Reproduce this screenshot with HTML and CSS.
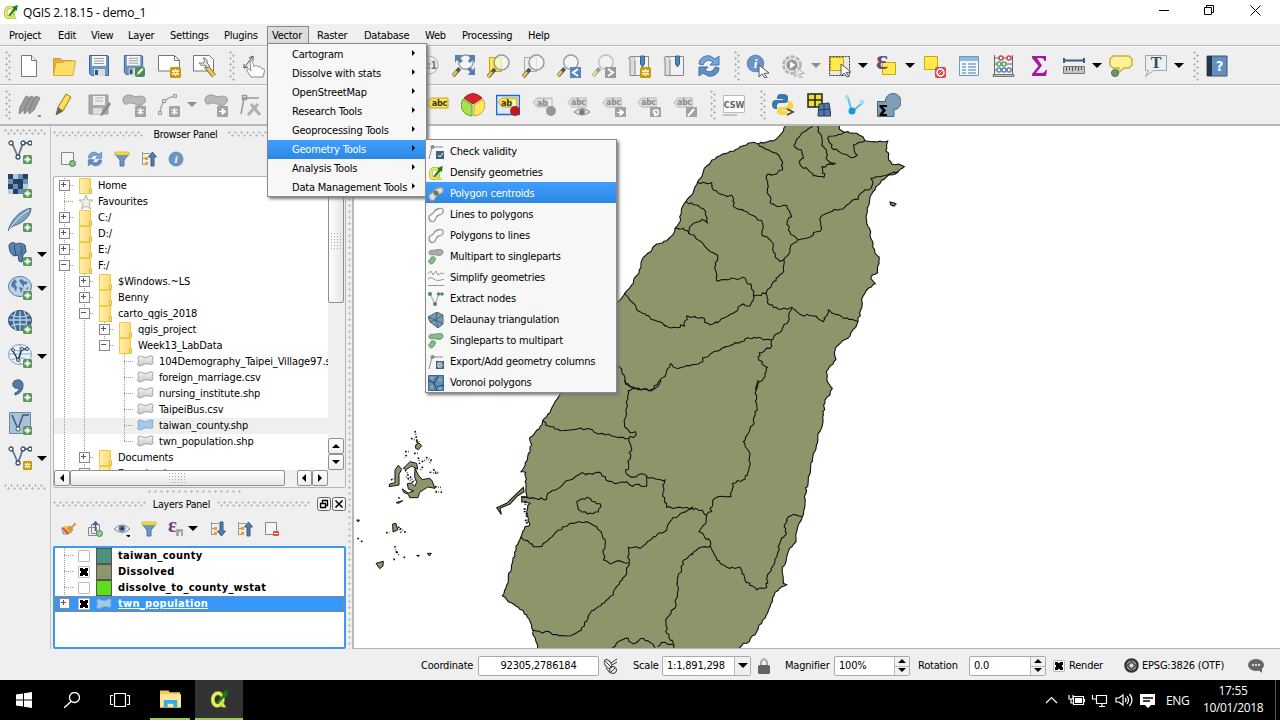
FILE: index.html
```html
<!DOCTYPE html>
<html lang="en">
<head>
<meta charset="utf-8">
<title>QGIS 2.18.15 - demo_1</title>
<link rel="stylesheet" href="styles.css">
</head>
<body>
<svg class="defs" width="0" height="0">
<defs>
<linearGradient id="gf" x2="1"><stop stop-color="#fff0b0"/><stop offset="1" stop-color="#fbdc74"/></linearGradient>
<linearGradient id="gg" x2="0" y2="1"><stop stop-color="#f4f4f4"/><stop offset="1" stop-color="#c9c9c9"/></linearGradient>
<symbol id="plus" viewBox="0 0 9 9"><rect width="9" height="9" rx="1.5" fill="#5b965b"/><path d="M4.5 1.5v6M1.5 4.5h6" stroke="#fff" stroke-width="1.8"/></symbol>
<symbol id="star" viewBox="0 0 11 11"><rect width="11" height="11" rx="1.5" fill="#c79b05"/><path d="M5.500 2v7M2.200 3.500l6.600 4M2.200 7.500l6.600-4" stroke="#fff" stroke-width="1.600"/><circle cx="5.500" cy="5.500" r="1" fill="#c79b05"/></symbol>
<symbol id="gbox" viewBox="0 0 11 11"><rect width="11" height="11" rx="1" fill="#a2a2a2"/></symbol>
<symbol id="qgis" viewBox="0 0 24 24"><path d="M10.500 5C6 5 4 9 4 13s2 7 5.500 7 6.500-4 6.500-8-2-7-5.500-7z" fill="none" stroke="#8fa02c" stroke-width="5"/><path d="M10.500 5C6 5 4 9 4 13s2 7 5.500 7 6.500-4 6.500-8-2-7-5.500-7z" fill="none" stroke="#e6ee62" stroke-width="3.600"/><path d="M11 15l4-1 5 8h-5z" fill="#dce650" stroke="#8fa02c" stroke-width=".6"/><path d="M8 17l8-10-2-2 8-4-1 9-2-1-9 9z" fill="#1f7a18"/></symbol>
<symbol id="new" viewBox="0 0 24 24"><path d="M4.500 1.500h10l5 5v16h-15z" fill="#fff" stroke="#777"/><path d="M14.500 1.500v5h5" fill="#eee" stroke="#777"/></symbol>
<symbol id="open" viewBox="0 0 24 24"><path d="M1.500 21V4.500h7l2 2h10V11" fill="#e0b13a" stroke="#d09c22"/><path d="M1.500 21.500L4 8.500h7l2-1.500h10.500l-2.500 14.500z" fill="#ffdf68" stroke="#dcaa30"/></symbol>
<symbol id="save" viewBox="0 0 24 24"><path d="M2.500 1.500h18l1 1v19h-17l-2-2z" fill="#6a95c6" stroke="#41658f"/><path d="M5 2h14v10H5z" fill="#f6f6f3"/><path d="M7 4.500h10M7 7h10M7 9.500h10" stroke="#999"/><path d="M7 15h11v7H7z" fill="#ddd"/><path d="M8 16h3v5H8z" fill="#31557d"/></symbol>
<symbol id="saveas" viewBox="0 0 24 24"><use href="#save" width="23" height="23"/><rect x="13" y="13" width="10" height="10" rx="2" fill="#518955"/><path d="M15 21l1-3 4-4 1.500 1.500-4 4z" fill="#fff"/></symbol>
<symbol id="newcomp" viewBox="0 0 24 24"><path d="M1.500 1.500h16l5 5V17h-21z" fill="#fff" stroke="#777"/><path d="M17.500 2v4.500h5" fill="none" stroke="#777"/><use href="#star" x="13" y="13" width="11" height="11"/></symbol>
<symbol id="compmgr" viewBox="0 0 24 24"><path d="M1.500 1.500h16l4 4V17h-20z" fill="#fff" stroke="#777"/><path d="M14 12l8 10" stroke="#8a7630" stroke-width="5"/><path d="M15 13l7 9" stroke="#eac952" stroke-width="3"/><path d="M7 9c2 3 4 3 6 2l2 3 3-2-3-3c1-3-1-5-4-5l2 3-2 2z" fill="#ddd" stroke="#777"/></symbol>
<symbol id="hand" viewBox="0 0 24 24"><path d="M9 23l-4-6c-1-3 2-3 4 0l-1-9c1-3 3 0 4 5 1-2 3-2 4 0 2-1 3 0 4 2 2-1 3 1 2 4l-1 4z" fill="#fff" stroke="#888"/><path d="M2 14l9-12M2 14v-4m0 4l4-1M11 2L7 4m4-2v5" stroke="#555" fill="none"/></symbol>
<symbol id="one" viewBox="0 0 24 24"><circle cx="12" cy="11" r="9" fill="#eee" stroke="#aaa"/><text x="12" y="15" font-size="10" text-anchor="middle" fill="#777" font-weight="bold">1:1</text></symbol>
<symbol id="lens" viewBox="0 0 24 24"><path d="M1 23l7-8" stroke="#555" stroke-width="4"/><path d="M1 23l4-5" stroke="#f4cf3d" stroke-width="2.500"/><circle cx="14.500" cy="8.500" r="7.500" fill="#f7f7f7" fill-opacity=".72" stroke="#9a9a9a" stroke-width="1.500"/></symbol>
<symbol id="full" viewBox="0 0 24 24"><use href="#lens" width="23" height="23"/><path d="M3 1h8L8 4l3 3-3 2-3-3-2 3zM23 1h-7l2 3-2 3 2 2 3-3 2 3zM23 21h-7l2-3-3-3 3-2 3 3 2-3zM1 13l3 3z" fill="#587fae"/></symbol>
<symbol id="zsel" viewBox="0 0 24 24"><path d="M2.500 3.500h12v14h-12z" fill="#ffe94d" stroke="#caa800"/><use href="#lens" width="24" height="24"/></symbol>
<symbol id="zlay" viewBox="0 0 24 24"><path d="M2.500 3.500h12v14h-12z" fill="#eee" stroke="#aaa"/><use href="#lens" width="24" height="24"/></symbol>
<symbol id="zlast" viewBox="0 0 24 24"><use href="#lens" width="23" height="23"/><rect x="13" y="13" width="11" height="11" fill="#5c86b8"/><path d="M21 15l-5 3.500 5 3.500" fill="none" stroke="#fff" stroke-width="2"/></symbol>
<symbol id="znext" viewBox="0 0 24 24"><g opacity=".55"><use href="#lens" width="23" height="23"/></g><rect x="13" y="13" width="11" height="11" fill="#9a9a9a"/><path d="M16 15l5 3.500-5 3.500" fill="none" stroke="#fff" stroke-width="2"/></symbol>
<symbol id="book" viewBox="0 0 24 24"><path d="M7.500 2.500h14v19h-14z" fill="#f2f2f2" stroke="#888"/><path d="M7 2.500H4C2 2.500 1.500 5 3 6v15.500h5V6" fill="#ddd" stroke="#888"/><path d="M13.500 2h4v8l-2 3-2-3z" fill="#5685be" stroke="#345e91"/></symbol>
<symbol id="booknew" viewBox="0 0 24 24"><use href="#book" width="24" height="24"/><use href="#star" x="13" y="13" width="11" height="11"/></symbol>
<symbol id="refresh" viewBox="0 0 24 24"><path d="M2 10C2 4 8 1 13 2l5 3 4-3v9h-9l3-3C12 5 8 6 6 11z" fill="#78a6d9" stroke="#4a76aa"/><path d="M22 14c0 6-6 9-11 8l-5-3-4 3v-9h9l-3 3c4 3 8 2 10-3z" fill="#5e8fc8" stroke="#426fa5"/></symbol>
<symbol id="cur" viewBox="0 0 12 14"><path d="M1 1l10 8-5 .500 3 4-2 .500-3-4-3 3z" fill="#fff" stroke="#555"/></symbol>
<symbol id="info" viewBox="0 0 24 24"><circle cx="12" cy="12" r="10.500" fill="#6a95c7" stroke="#4d76a5"/><text x="12" y="18" font-size="17" font-style="italic" font-family="Liberation Serif" font-weight="bold" text-anchor="middle" fill="#fff">i</text></symbol>
<symbol id="ident" viewBox="0 0 24 24"><use href="#info" width="19" height="19"/><use href="#cur" x="12" y="10" width="12" height="14"/></symbol>
<symbol id="act" viewBox="0 0 24 24"><circle cx="11" cy="11" r="8.500" fill="#e4e4e4" stroke="#b2b2b2" stroke-width="2.500" stroke-dasharray="4 1.500"/><circle cx="11" cy="11" r="5.500" fill="#999"/><path d="M9 7.500l5.500 3.500L9 14.500z" fill="#fff"/><use href="#cur" x="13" y="11" width="11" height="13" opacity=".5"/></symbol>
<symbol id="sel" viewBox="0 0 24 24"><path d="M1.500 2.500h20v19h-20z" fill="#e8e8e8" stroke="#333" stroke-dasharray="2 1"/><path d="M2.500 3.500h13v13h-13z" fill="#ffe94d" stroke="#caa800"/><use href="#cur" x="12" y="8" width="12" height="16"/></symbol>
<symbol id="eps" viewBox="0 0 24 24"><path d="M7.500 8.500h13v12h-13z" fill="#ffe94d" stroke="#caa800"/><text x="1" y="15" font-family="Liberation Serif" font-size="28" fill="#694578" font-weight="bold">ε</text></symbol>
<symbol id="desel" viewBox="0 0 24 24"><path d="M2.500 2.500h13v13h-13z" fill="#ffe94d" stroke="#caa800"/><rect x="13" y="13" width="11" height="11" rx="2" fill="#df4549"/><circle cx="18.500" cy="18.500" r="3.500" fill="none" stroke="#fff" stroke-width="1.500"/><path d="M16 21l5-5" stroke="#fff"/></symbol>
<symbol id="table" viewBox="0 0 24 24"><path d="M2.500 2.500h19v19h-19z" fill="#f2f8fd" stroke="#7198c2"/><path d="M3 3h18v4H3z" fill="#8db8e0"/><path d="M5 10h4m2 0h8M5 13h4m2 0h8M5 16h4m2 0h8M5 19h4m2 0h8" stroke="#7ba2ca" stroke-width="1.500"/></symbol>
<symbol id="abacus" viewBox="0 0 24 24"><path d="M2.500 1v20M20.500 1v20M2 4h19M2 10h19M2 16h19" stroke="#666" fill="none"/><path d="M1 20.500h21v2H1z" fill="#bbb" stroke="#777"/><g fill="#fff" stroke-width="1.500"><g stroke="#ce4545"><circle cx="9" cy="4" r="2"/><circle cx="17" cy="4" r="2"/></g><g stroke="#54a269"><circle cx="7" cy="10" r="2"/><circle cx="12" cy="10" r="2"/></g><g stroke="#5983ae"><circle cx="7" cy="16" r="2"/><circle cx="12" cy="16" r="2"/><circle cx="17" cy="16" r="2"/></g></g></symbol>
<symbol id="sigma" viewBox="0 0 24 24"><path d="M5 2h14v5h-1.500c-.500-2-1.500-3-4-3H10l5 7.500-6 7.500h5c3 0 4-1 5-3.500l1 .500-1 6H5v-2l6.500-8L5 4z" fill="#a718a0"/></symbol>
<symbol id="ruler" viewBox="0 0 24 24"><path d="M2 4v5m20-5v5M2 6.500h20" stroke="#3c5d83" stroke-width="2"/><path d="M1.500 12.500h21v7h-21z" fill="#c6c6c6" stroke="#777"/><path d="M4.500 13v4m3-4v3m3-3v4m3-4v3m3-3v4m3-4v3" stroke="#555"/></symbol>
<symbol id="tip" viewBox="0 0 24 24"><path d="M4 2h16l3 3v6l-3 3h-5l-7 6 2-6H4l-3-3V5z" fill="#fff09a" stroke="#cdae3b" stroke-width="1.500"/><circle cx="6" cy="19" r="3.500" fill="#659d69" stroke="#41734a"/></symbol>
<symbol id="note" viewBox="0 0 24 24"><path d="M1.500 1.500h21v15h-13l-8 6 3-6h-3z" fill="#e8f0f3" stroke="#9ba7ad"/><text x="12" y="14" font-family="Liberation Serif" font-weight="bold" font-size="16" text-anchor="middle" fill="#444">T</text></symbol>
<symbol id="help" viewBox="0 0 24 24"><path d="M2 2h20v20H2z" fill="#638fbe" stroke="#41536b"/><path d="M2 2h5v20H2z" fill="#263647"/><text x="14.500" y="17" font-size="14" text-anchor="middle" fill="#fff">?</text></symbol>
<symbol id="pens" viewBox="0 0 24 24"><g fill="#9b9b9b" stroke="#838383"><path d="M2 21l1-7 6-11 4 2-6 12zM7 21l1-7 6-11 4 2-6 12zM12 21l1-7 6-11 4 2-6 12z"/></g><path d="M20 22h5l-2.500 3z" fill="#888"/></symbol>
<symbol id="pen" viewBox="0 0 24 24"><path d="M4 22l2-8 8-13 5 3-8 14z" fill="#f8d842" stroke="#938127"/><path d="M4 22l2-8 5 4z" fill="#666"/><path d="M9 15l7-12" stroke="#fff3a5"/></symbol>
<symbol id="saveg" viewBox="0 0 24 24"><path d="M2 2h19v19H2z" fill="#aaa" stroke="#999"/><path d="M6 3h12v9H6z" fill="#eee"/><path d="M8 5h8M8 8h8" stroke="#aaa"/><path d="M6 15h9v6H6z" fill="#ddd"/><path d="M13 22l9-13 2 2-9 12z" fill="#888"/></symbol>
<symbol id="blob" viewBox="0 0 24 24"><path d="M1 7C1 2 7 1 11 3s9-2 12 2c2 5-4 9-8 7S8 9 5 11c-2 1-4-1-4-4z" fill="#b8b8b8" stroke="#999"/></symbol>
<symbol id="blobnew" viewBox="0 0 24 24"><use href="#blob" width="24" height="24"/><use href="#gbox" x="13" y="13" width="11" height="11"/><path d="M18.500 15v7m-3-5.500l6 4m-6 0l6-4" stroke="#fff" stroke-width="1.300"/></symbol>
<symbol id="blobmv" viewBox="0 0 24 24"><use href="#blob" width="24" height="24"/><use href="#gbox" x="13" y="13" width="11" height="11"/><path d="M15 18.500h3v-3l4 3-4 3v-3" stroke="#fff" fill="#fff"/></symbol>
<symbol id="curve" viewBox="0 0 24 24"><path d="M3 20C4 9 9 4 19 3" fill="none" stroke="#aaa" stroke-width="1.500"/><g fill="#ddd" stroke="#999"><path d="M1.500 18.500h3v3h-3zM5.500 6.500h3v3h-3zM16.500 1.500h3v3h-3z"/></g><use href="#gbox" x="12" y="13" width="11" height="11"/><path d="M17.500 15v7m-3-5.500l6 4m-6 0l6-4" stroke="#fff" stroke-width="1.300"/></symbol>
<symbol id="node" viewBox="0 0 24 24"><path d="M2 21L5 5h15M3.500 2.500h4v4h-4z" fill="none" stroke="#999" stroke-width="1.500"/><path d="M9 22L19 11M12 11l9 11" stroke="#b0b0b0" stroke-width="3"/></symbol>
<symbol id="abc" viewBox="0 0 24 24"><path d="M1 10l4-5h17v10H5z" fill="#ffe44c" stroke="#c4a61b"/><text x="13.500" y="13" text-anchor="middle" font-weight="bold" font-size="9" fill="#333">abc</text></symbol>
<symbol id="abcg" viewBox="0 0 24 24"><path d="M1 6l4-5h16v10H5z" fill="#ddd" stroke="#b8b8b8"/><text x="12.500" y="9" text-anchor="middle" font-weight="bold" font-size="9" fill="#888">abc</text></symbol>
<symbol id="pie" viewBox="0 0 24 24"><path d="M12 11L3 5q9-9 18 0z" fill="#d9232a" stroke="#a3191e"/><path d="M11 12v11C1 22-2 13 2 6z" fill="#a6e24a" stroke="#5fa01c"/><path d="M13 12v11C23 22 26 13 22 6z" fill="#ffe75e" stroke="#c3a72b"/></symbol>
<symbol id="pin" viewBox="0 0 24 24"><path d="M.5 2.500h23v19h-23z" fill="#dbe9f8" stroke="#1c68d7" stroke-width="1.500"/><path d="M2 9l4-4h15v9H6z" fill="#ffe44c" stroke="#c4a61b"/><text x="10.500" y="12.500" text-anchor="middle" font-weight="bold" font-size="9" fill="#333">ab</text><path d="M18 7v9" stroke="#fff" stroke-width="2.500"/><circle cx="19" cy="18" r="5" fill="#b91923"/></symbol>
<symbol id="ping" viewBox="0 0 24 24"><path d="M1 9l4-4h15v9H5z" fill="#ddd" stroke="#b8b8b8"/><text x="10.500" y="12.500" text-anchor="middle" font-weight="bold" font-size="9" fill="#888">ab</text><path d="M18 7v9" stroke="#eee" stroke-width="2.500"/><circle cx="19" cy="18" r="5" fill="#969696"/></symbol>
<symbol id="abceye" viewBox="0 0 24 24"><use href="#abcg" y="4" width="22" height="22"/><path d="M7 19q8-7 16 0q-8 6-16 0z" fill="#ddd" stroke="#888"/><circle cx="15" cy="19" r="2.800" fill="#777"/></symbol>
<symbol id="abcmv" viewBox="0 0 24 24"><use href="#abcg" y="4" width="22" height="22"/><use href="#gbox" x="13" y="14" width="11" height="11"/><path d="M15 19.500h3v-3l4 3-4 3v-3" stroke="#fff" fill="#fff"/></symbol>
<symbol id="abcrot" viewBox="0 0 24 24"><use href="#abcg" y="4" width="22" height="22"/><use href="#gbox" x="13" y="14" width="11" height="11"/><path d="M17 22c5 1 6-5 2-5s-3 4 0 3" fill="none" stroke="#fff" stroke-width="1.600"/></symbol>
<symbol id="abced" viewBox="0 0 24 24"><use href="#abcg" y="4" width="22" height="22"/><use href="#gbox" x="13" y="14" width="11" height="11"/><path d="M15 23l6-7" stroke="#fff" stroke-width="2"/></symbol>
<symbol id="csw" viewBox="0 0 24 24"><path d="M1.500 2.500h21v17h-21z" fill="#fff" stroke="#bbb"/><path d="M1 22h14" stroke="#999"/><text x="12" y="15" font-size="9" font-weight="bold" font-family="DejaVu Sans Condensed" text-anchor="middle" fill="#666">CSW</text></symbol>
<symbol id="py" viewBox="0 0 24 24"><path d="M11 1c-5 0-5 2-5 5h6v1H4c-4 0-4 9 0 9h2v-3c0-2 1-3 3-3h5c2 0 3-1 3-3V4c0-2-2-3-6-3z" fill="#3b76ab"/><path d="M12 22c5 0 5-2 5-4h-6v-1h8c5 0 4-9 0-9h-2v3c0 2-1 3-3 3H9c-2 0-3 1-3 3v2c0 2 2 3 6 3z" fill="#ffd340"/><path d="M16 16l6 3-6 3" stroke="#444" stroke-width="1.700" fill="none"/></symbol>
<symbol id="georef" viewBox="0 0 24 24"><path d="M1 1h14v13H1z" fill="#f0df2c" stroke="#222" stroke-width="1.500"/><path d="M8 1v13M1 7h14" stroke="#222" stroke-width="1.500"/><path d="M12 11l10-1 2 13H11z" fill="#5477ae" stroke="#24374e"/><path d="M17 11v12M12 17l11-1" stroke="#24374e"/></symbol>
<symbol id="topo" viewBox="0 0 24 24"><path d="M6 5l4 14 10-9" fill="none" stroke="#61bfea" stroke-width="2"/><circle cx="5" cy="4" r="2.200" fill="#a6dcf4"/><circle cx="20" cy="9" r="2.500" fill="#a6dcf4"/><circle cx="10" cy="18" r="3.500" fill="#159ae0"/></symbol>
<symbol id="spat" viewBox="0 0 24 24"><path d="M.5 8.500h8C8 4 12 .5 16 .500s8 3 8 8-3 8-7 8v7H.5z" fill="#7f9eb5" stroke="#46677f"/><path d="M2.500 12H10v2H6l3 3.500L6 21h4v2H2.500v-2l3-3.500-3-3.500z" fill="#000"/></symbol>
<symbol id="vec" viewBox="0 0 24 24"><path d="M4 3l6 14 5-14h6" fill="none" stroke="#61788c" stroke-width="1.800"/><g fill="#fff" stroke="#3c5468" stroke-width="1.300"><circle cx="3" cy="3" r="2"/><circle cx="10" cy="17" r="2"/><circle cx="15" cy="3" r="2"/><circle cx="22" cy="3" r="2"/></g></symbol>
<symbol id="vecadd" viewBox="0 0 24 24"><use href="#vec" width="24" height="24"/><use href="#plus" x="15" y="15" width="9" height="9"/></symbol>
<symbol id="ras" viewBox="0 0 24 24"><path d="M0 0h20v20H0z" fill="#6490be"/><path d="M0 0h5v5H0zM10 5h5V0h5v5h-5v5h-5zM5 5h5v5H5zM0 10h5v5h5v5H5v-5H0zM10 10h5v5h-5z" fill="#27405c"/><path d="M5 0h5v5H5zM15 10h5v5h-5zM0 15h5v5H0z" fill="#b2cce5"/><use href="#plus" x="15" y="15" width="9" height="9"/></symbol>
<symbol id="feath" viewBox="0 0 24 24"><path d="M0 23C3 13 10 3 23 0c0 8-8 15-18 18z" fill="#7fa3c6" stroke="#48657f"/><path d="M1 22C7 13 13 7 21 2" stroke="#dce8f4" fill="none"/><use href="#plus" x="15" y="15" width="9" height="9"/></symbol>
<symbol id="pg" viewBox="0 0 24 24"><path d="M1 3c3-4 6-2 7-1 4-2 7 0 9 1l1 7-3 3-1 7-3-1-1-6-4 1c-4-2-5-7-5-11z" fill="#5a85b3" stroke="#2f4c6c"/><path d="M7 3c-2 4 2 7 0 11M13 4c2 4 0 6 0 9" stroke="#2f4c6c" fill="none"/><use href="#plus" x="15" y="15" width="9" height="9"/></symbol>
<symbol id="globe" viewBox="0 0 24 24"><ellipse cx="12" cy="10.500" rx="11.500" ry="10" fill="#bcd3ea" stroke="#56789b"/><path d="M4 6l3-3 2 3-2 2 2 3-1 5-2-4-3-2zM11 4l3-1 2 2 4 1-2 3-2-1v3l-3-3zM11 11l4 1-2 5zM18 12l3-1-2 3z" fill="#517aa5"/><use href="#plus" x="15" y="15" width="9" height="9"/></symbol>
<symbol id="wcs" viewBox="0 0 24 24"><ellipse cx="12" cy="10.500" rx="11.500" ry="10" fill="#426b97" stroke="#2a4765"/><path d="M1 10h22M12 1v20M3 5q9 4 18 0M3 16q9-4 18 0M8 1q-5 10 0 19M16 1q5 10 0 19" stroke="#b9d0e8" fill="none" stroke-width="1.300"/><use href="#plus" x="15" y="15" width="9" height="9"/></symbol>
<symbol id="wfs" viewBox="0 0 24 24"><ellipse cx="12" cy="10.500" rx="11.500" ry="10" fill="#eaf2fa" stroke="#7ba0c7"/><path d="M1 10h22M12 1v20M3 5q9 4 18 0M3 16q9-4 18 0" stroke="#88abd0" fill="none"/><path d="M5 7l5 9 4-11h5" fill="none" stroke="#2c3d4e" stroke-width="1.500"/><g fill="#fff" stroke="#2c3d4e"><circle cx="5" cy="6" r="1.500"/><circle cx="10" cy="16" r="1.500"/><circle cx="14" cy="5" r="1.500"/><circle cx="19" cy="5" r="1.500"/></g><use href="#plus" x="15" y="15" width="9" height="9"/></symbol>
<symbol id="comma" viewBox="0 0 24 24"><path d="M5 5c1-4 10-5 10 2 0 6-4 9-8 10v-2c3-1 4-3 4-5-4 1-7-1-6-5z" fill="#527ca7" stroke="#395876"/><use href="#plus" x="15" y="15" width="9" height="9"/></symbol>
<symbol id="virt" viewBox="0 0 24 24"><path d="M1.500.5h21v21h-21z" fill="#aac2d9" stroke="#6c8aa9"/><path d="M4 3l6 14 5-14h6" fill="none" stroke="#40576c" stroke-width="1.500"/><circle cx="10" cy="17" r="2" fill="#fff" stroke="#40576c"/><use href="#plus" x="15" y="14" width="9" height="9"/></symbol>
<symbol id="vecnew" viewBox="0 0 24 24"><use href="#vec" width="24" height="24"/><use href="#star" x="15" y="15" width="9" height="9"/></symbol>
<symbol id="folder" viewBox="0 0 16 16"><path d="M1.500 .5h11v15h-11z" fill="url(#gf)" stroke="#edc94e"/><path d="M11.500 11h2v4.500h-2z" fill="#fde48c" stroke="#e0b73e"/></symbol>
<symbol id="fav" viewBox="0 0 16 16"><path d="M8 1l2 5h5l-4 3.500L12.500 15 8 12l-4.500 3L5 9.500 1 6h5z" fill="#edf0e4" stroke="#aeb3a3"/></symbol>
<symbol id="shp" viewBox="0 0 17 12"><path d="M1 3c0-3 3-2 5-1s5 0 7-.800 3.500-.5 3 1.500c-1 2-.5 3 0 5 0 2-2 2-4 1.300s-4-.3-6 .8-4 1.500-5 .2.500-2 .5-3.500S1 4.500 1 3z" fill="url(#gg)" stroke="#9f9f9f"/></symbol>
<symbol id="shpb" viewBox="0 0 17 12"><path d="M1 3c0-3 3-2 5-1s5 0 7-.800 3.500-.5 3 1.500c-1 2-.5 3 0 5 0 2-2 2-4 1.300s-4-.3-6 .8-4 1.500-5 .2.500-2 .5-3.500S1 4.500 1 3z" fill="#a4c8e8" stroke="#7fa9d2"/></symbol>
<symbol id="addl" viewBox="0 0 16 16"><path d="M1.500 1.500h12v12h-12z" fill="#f5f5f5" stroke="#888"/><circle cx="12.500" cy="12.500" r="3" fill="#8fbf91" stroke="#43854b"/></symbol>
<symbol id="filter" viewBox="0 0 16 16"><path d="M1 3h14L10 9v6H6V9z" fill="#6c97c5" stroke="#517598"/><path d="M1 1h14v3H1z" fill="#f5de4e" stroke="#c8ae26" stroke-width=".7"/></symbol>
<symbol id="coll" viewBox="0 0 16 16"><path d="M1.500 1v13M1 2.500h8M1 7.500h4M1 13.500h4" stroke="#999"/><path d="M4 6h3v3H4zM4 11h3v3H4z" fill="#ef9d2b"/><path d="M11.500 1l4 5H13v9h-3V6H7.500z" fill="#547fb2" stroke="#355a84"/></symbol>
<symbol id="expd" viewBox="0 0 16 16"><path d="M1.500 1v13M1 2.500h8M1 7.500h4M1 13.500h4" stroke="#999"/><path d="M4 6h3v3H4zM4 11h3v3H4z" fill="#ef9d2b"/><path d="M11.500 15l4-5H13V1h-3v9H7.500z" fill="#547fb2" stroke="#355a84"/></symbol>
<symbol id="brush" viewBox="0 0 16 16"><path d="M1 7l5-2 6 6-5 3z" fill="#e65b46"/><path d="M3 6l3-1 6 6-2 1z" fill="#f3cc44"/><path d="M1 8l5 6-3-1z" fill="#668cc4"/><path d="M7 7l2-2 2 1 4-4 1 1-4 4 1 2-2 2z" fill="#d7983e" stroke="#b47625" stroke-width=".5"/></symbol>
<symbol id="grp" viewBox="0 0 16 16"><path d="M1.500 6.500h8v8h-8zM4.500 3.500h8v9h-8z" fill="#eee" stroke="#888"/><path d="M8.500 10V2M6 4l2.500-3L11 4" stroke="#3c638e" fill="none" stroke-width="1.500"/><circle cx="12.500" cy="12.500" r="3" fill="#a1c5a1" stroke="#43854b"/></symbol>
<symbol id="eye" viewBox="0 0 16 16"><path d="M0 8q8-8 16 0q-8 7-16 0z" fill="#e9e9e9" stroke="#8d8d8d"/><circle cx="8" cy="7.500" r="3.300" fill="#517aa6"/><circle cx="8" cy="7.500" r="1.300" fill="#18283a"/><path d="M12 14h5l-2.500 2.500z"/></symbol>
<symbol id="epsf" viewBox="0 0 16 16"><text x="0" y="11" font-family="Liberation Serif" font-size="21" font-weight="bold" fill="#694578">ε</text><path d="M8 8h7v7h-2v-4h-2v4H8z" fill="#aaa"/></symbol>
<symbol id="rem" viewBox="0 0 16 16"><path d="M1.500 1.500h11v12h-11z" fill="#f5f5f5" stroke="#888"/><rect x="9" y="10" width="6" height="5" rx="1" fill="#df5050"/><path d="M10 12.500h4" stroke="#fff"/></symbol>
<symbol id="mcheck" viewBox="0 0 16 16"><path d="M1 15L4 3h11" stroke="#888" fill="none"/><circle cx="4.500" cy="3" r="2" fill="#6d9c74"/><path d="M8 7h8v8H8z" fill="#496079"/><path d="M10 11l2 2 3-4" stroke="#fff" fill="none"/></symbol>
<symbol id="mexp" viewBox="0 0 16 16"><path d="M1 15L4 3h11" stroke="#888" fill="none"/><circle cx="4.500" cy="3" r="2" fill="#6d9c74"/><path d="M8 7h8v8H8z" fill="#496079"/><path d="M14 9h-4v4h4M11 11h4" stroke="#fff" fill="none"/></symbol>
<symbol id="mpoly" viewBox="0 0 16 16"><path d="M1 11c-1-4 4-3 5-6s8-5 9-2-2 5-4 5-3 3-4 5-5 3-6-2z" fill="#fafafa" stroke="#999" stroke-width="1.300"/></symbol>
<symbol id="mcent" viewBox="0 0 16 16"><path d="M1 11c-1-4 4-3 5-6s8-5 9-2-2 5-4 5-3 3-4 5-5 3-6-2z" fill="#ddd" stroke="#999" stroke-width="1.300"/><circle cx="8" cy="7" r="2.500" fill="#637d60"/></symbol>
<symbol id="mmulti" viewBox="0 0 16 16"><path d="M1 4c0-4 4-2 7-3s7-1 7 2-3 4-6 3-8 1-8-2z" fill="#aaa" stroke="#888"/><path d="M6 8c3 1 1 3 0 5s-4 3-5 0 2-2 2-4 2-1 3-1z" fill="#83be86" stroke="#639368"/></symbol>
<symbol id="msing" viewBox="0 0 16 16"><path d="M1 4c0-4 4-2 7-3s7-1 7 2-3 4-6 3-8 1-8-2z" fill="#83be86" stroke="#639368"/><path d="M6 8c3 1 1 3 0 5s-4 3-5 0 2-2 2-4 2-1 3-1z" fill="#83be86" stroke="#639368"/></symbol>
<symbol id="msimp" viewBox="0 0 16 16"><path d="M0 4l3-3 2 4 3-4 2 4 3-2 3 1M0 9q3-3 6 0t10 0M0 15.500h16" fill="none" stroke="#999"/></symbol>
<symbol id="mext" viewBox="0 0 16 16"><path d="M2 3l5 10 4-10h4" fill="none" stroke="#8aa4b1"/><g fill="#4c8274"><circle cx="2" cy="3" r="2"/><circle cx="7" cy="13" r="2"/><circle cx="10.500" cy="3" r="1.700"/><circle cx="14" cy="3" r="1.700"/></g></symbol>
<symbol id="mdel" viewBox="0 0 16 16"><path d="M0 5l9-5 6 3v9l-5 4-8-6z" fill="#7a9ab2" stroke="#496981"/><path d="M0 5l8 3 1-8M8 8l7-5M8 8l7 4M8 8l2 8M8 8l-6 2" stroke="#44647d" fill="none"/></symbol>
<symbol id="mvor" viewBox="0 0 16 16"><path d="M.5.500h15v15H.5z" fill="#5d8dc3" stroke="#3e6797"/><path d="M0 5l6 3 4-7M6 8l3 8M9 12l7-2" stroke="#1c3a5e" fill="none"/><g fill="#9ab765"><circle cx="4" cy="3" r="1.600"/><circle cx="12" cy="5" r="1.600"/><circle cx="4" cy="12" r="1.600"/><circle cx="12" cy="13" r="1.600"/></g></symbol>
</defs>
</svg>

<div class="app">
<header class="title"><svg class="s16"><use href="#qgis"/></svg><span>QGIS 2.18.15 - demo_1</span>
<svg class="winbtns" viewBox="0 0 110 24"><g fill="none" stroke="#000"><path d="M3 10.500h10M48.500 7.500h7v7h-7zM50.500 7.500v-2h7v7h-2M94.500 5.500l10 10m0-10l-10 10"/></g></svg></header>
<nav class="menubar"><span class="m1">Project</span><span class="m2">Edit</span><span class="m3">View</span><span class="m4">Layer</span><span class="m5">Settings</span><span class="m6">Plugins</span><span class="m7">Vector</span><span class="m8">Raster</span><span class="m9">Database</span><span class="m10">Web</span><span class="m11">Processing</span><span class="m12">Help</span></nav>
<div class="bar"><i class="grip first"></i>
<b><svg><use href="#new"/></svg></b><b><svg><use href="#open"/></svg></b><b><svg><use href="#save"/></svg></b><b><svg><use href="#saveas"/></svg></b><b><svg><use href="#newcomp"/></svg></b><b><svg><use href="#compmgr"/></svg></b><i class="grip wide"></i>
<b><svg><use href="#hand"/></svg></b><b></b><b></b><b></b><b></b><b><svg><use href="#one"/></svg></b><b><svg><use href="#full"/></svg></b><b><svg><use href="#zsel"/></svg></b><b><svg><use href="#zlay"/></svg></b><b><svg><use href="#zlast"/></svg></b><b><svg><use href="#znext"/></svg></b><b><svg><use href="#booknew"/></svg></b><b><svg><use href="#book"/></svg></b><b><svg><use href="#refresh"/></svg></b><i class="grip"></i>
<b><svg><use href="#ident"/></svg></b><b><svg><use href="#act"/></svg></b><em class="off"></em><b><svg><use href="#sel"/></svg></b><em></em><b><svg><use href="#eps"/></svg></b><em></em><b><svg><use href="#desel"/></svg></b><b><svg><use href="#table"/></svg></b><b><svg><use href="#abacus"/></svg></b><b><svg><use href="#sigma"/></svg></b><b><svg><use href="#ruler"/></svg></b><em></em><b><svg><use href="#tip"/></svg></b><b><svg><use href="#note"/></svg></b><em></em><i class="grip"></i><b><svg><use href="#help"/></svg></b></div>
<div class="bar two"><i class="grip first"></i>
<b><svg><use href="#pens"/></svg></b><b><svg><use href="#pen"/></svg></b><b><svg><use href="#saveg"/></svg></b><b><svg><use href="#blobnew"/></svg></b><b><svg><use href="#curve"/></svg></b><em class="off"></em><b><svg><use href="#blobmv"/></svg></b><b><svg><use href="#node"/></svg></b><i class="gap"></i>
<b><svg><use href="#abc"/></svg></b><b><svg><use href="#pie"/></svg></b><b><svg><use href="#pin"/></svg></b><b><svg><use href="#ping"/></svg></b><b><svg><use href="#abceye"/></svg></b><b><svg><use href="#abcmv"/></svg></b><b><svg><use href="#abcrot"/></svg></b><b><svg><use href="#abced"/></svg></b><i class="grip"></i><b><svg><use href="#csw"/></svg></b><i class="grip"></i><b><svg><use href="#py"/></svg></b><b><svg><use href="#georef"/></svg></b><b><svg><use href="#topo"/></svg></b><b><svg><use href="#spat"/></svg></b></div>

<main class="main">
<aside class="side"><i class="hgrip"></i>
<p><svg><use href="#vecadd"/></svg></p><p><svg><use href="#ras"/></svg></p><p><svg><use href="#feath"/></svg></p><p><svg><use href="#pg"/></svg><em></em></p><p><svg><use href="#globe"/></svg><em></em></p><p><svg><use href="#wcs"/></svg></p><p><svg><use href="#wfs"/></svg><em></em></p><p><svg><use href="#comma"/></svg></p><p><svg><use href="#virt"/></svg></p><p><svg><use href="#vecnew"/></svg><em></em></p><i class="hgrip end"></i></aside>
<section class="dock">
<div class="dtitle"><i class="hgrip"></i><span>Browser Panel</span><i class="hgrip"></i><u></u></div>
<div class="dtools"><svg><use href="#addl"/></svg><svg><use href="#refresh"/></svg><svg><use href="#filter"/></svg><svg><use href="#coll"/></svg><svg><use href="#info"/></svg></div>
<div class="browser">
<div class="tree">
<div class="row"><i class="e"></i><svg><use href="#folder"/></svg><span>Home</span></div>
<div class="row"><i class="t"></i><svg><use href="#fav"/></svg><span>Favourites</span></div>
<div class="row"><i class="e"></i><svg><use href="#folder"/></svg><span>C:/</span></div>
<div class="row"><i class="e"></i><svg><use href="#folder"/></svg><span>D:/</span></div>
<div class="row"><i class="e"></i><svg><use href="#folder"/></svg><span>E:/</span></div>
<div class="row"><i class="e o"></i><svg><use href="#folder"/></svg><span>F:/</span></div>
<div class="row"><i class="v"></i><i class="e"></i><svg><use href="#folder"/></svg><span>$Windows.~LS</span></div>
<div class="row"><i class="v"></i><i class="e"></i><svg><use href="#folder"/></svg><span>Benny</span></div>
<div class="row"><i class="v"></i><i class="e o"></i><svg><use href="#folder"/></svg><span>carto_qgis_2018</span></div>
<div class="row"><i class="v"></i><i class="v"></i><i class="e"></i><svg><use href="#folder"/></svg><span>qgis_project</span></div>
<div class="row"><i class="v"></i><i class="v"></i><i class="e o l"></i><svg><use href="#folder"/></svg><span>Week13_LabData</span></div>
<div class="row f"><i class="v"></i><i class="v"></i><i></i><i class="t"></i><svg><use href="#shp"/></svg><span>104Demography_Taipei_Village97.shp</span></div>
<div class="row f"><i class="v"></i><i class="v"></i><i></i><i class="t"></i><svg><use href="#shp"/></svg><span>foreign_marriage.csv</span></div>
<div class="row f"><i class="v"></i><i class="v"></i><i></i><i class="t"></i><svg><use href="#shp"/></svg><span>nursing_institute.shp</span></div>
<div class="row f"><i class="v"></i><i class="v"></i><i></i><i class="t"></i><svg><use href="#shp"/></svg><span>TaipeiBus.csv</span></div>
<div class="row f hov"><i class="v"></i><i class="v"></i><i></i><i class="t"></i><svg><use href="#shpb"/></svg><span>taiwan_county.shp</span></div>
<div class="row f"><i class="v"></i><i class="v"></i><i></i><i class="t l"></i><svg><use href="#shp"/></svg><span>twn_population.shp</span></div>
<div class="row"><i class="v"></i><i class="e"></i><svg><use href="#folder"/></svg><span>Documents</span></div>
<div class="row"><i class="v"></i><i class="e"></i><svg><use href="#folder"/></svg><span>Download</span></div>
</div>
<div class="vs"><div class="thumb"><i></i></div><div class="sb up"></div><div class="sb dn"></div></div>
<div class="hs"><div class="sb lf"></div><div class="thumb"><i></i></div><div class="trk"></div><div class="sb lf"></div><div class="sb rt"></div></div>
</div>
<div class="split"></div>
<div class="dtitle lay"><i class="hgrip"></i><span>Layers Panel</span><i class="hgrip"></i><svg class="dbtn" viewBox="0 0 14 14"><rect x=".5" y=".5" width="13" height="13" rx="2" fill="#f5f5f5" stroke="#666"/><path d="M3.500 6.500h5v4h-5zM5.500 6V3.500h5v5H9M3 6.500h6M5 3.500h6" fill="none" stroke="#000" stroke-width="1.300"/></svg><svg class="dbtn" viewBox="0 0 14 14"><rect x=".5" y=".5" width="13" height="13" rx="2" fill="#f5f5f5" stroke="#666"/><path d="M3.500 3.500l7 7m0-7l-7 7" stroke="#000" stroke-width="1.600"/></svg></div>
<div class="dtools lt"><svg><use href="#brush"/></svg><svg><use href="#grp"/></svg><svg><use href="#eye"/></svg><svg><use href="#filter"/></svg><svg><use href="#epsf"/></svg><em></em><svg><use href="#expd"/></svg><svg><use href="#coll"/></svg><svg><use href="#rem"/></svg></div>
<div class="layers">
<div class="lrow"><i class="t"></i><q></q><s class="c1"></s><span>taiwan_county</span></div>
<div class="lrow"><i class="t"></i><q class="on"></q><s class="c2"></s><span>Dissolved</span></div>
<div class="lrow"><i class="t"></i><q></q><s class="c3"></s><span>dissolve_to_county_wstat</span></div>
<div class="lrow cur"><i class="e l"></i><q class="on"></q><svg><use href="#shpb"/></svg><span>twn_population</span></div>
</div>
</section>
<div class="vsplit"></div>
<svg class="map" viewBox="354 126 926 522" preserveAspectRatio="none">
<g fill="#8d966b" stroke="#111" stroke-width="1.100">
<path class="rough" data-step="3" data-amp="1" d="M785.700 120 785.700 126 781.700 133.300 775 140 766.700 142 758 144 754 142.300 748 143.300 743 145.700 728 152.700 720 155.700 711.700 160.300 707 165.700 703.300 171.700 702 176 697.300 182.700 694 190 690.700 196 685.700 201.700 681.700 208.300 679.700 216.700 680 221.700 675 228.300 672.700 235 666.700 240.700 656.700 244 651.700 250.700 643.300 257.300 641 263.300 639.300 270 633.300 283.300 624.700 293.300 620 300 600 325 580 360 560.300 394 555 401.700 550 412.700 542.700 420.700 540 426.700 530 437.300 531.700 445 527.300 460 521 471.700 525.700 472.300 526 486.700 527 496.700 521.700 496.700 521.700 502 530 503.300 526.700 511.700 529.300 525.700 525 526.700 521 536.700 516 546 512.700 561.700 508.300 576.700 506.700 585 502.300 595.700 508.300 601.700 518.300 607.300 526.700 615 531.700 625 532.700 633.300 536 641.700 537.700 648 537.700 655 739.300 655 739.300 648 743.300 643.300 749.300 641.700 756.700 631.700 759 625 765 618.300 770 606.700 775 592.300 781.700 586.700 786.700 584.700 783.300 583.300 783 576 782.300 567.300 786 561.700 788.300 551.700 796 541.700 796.700 531.700 802.300 516.700 805 505 804.300 496.700 808.300 480 810.700 466.700 813.300 453.300 817.300 443.300 818.300 433.300 822.700 423.300 825 400 830 395 832.300 388.300 827.300 381.700 826.300 371.700 830 366 836 359.300 835 350 838.300 345 850 336 853.300 329.300 858 321.700 860.700 310 862.700 296.700 868.300 288.300 875.300 283.700 870.700 278.300 872.300 275 877.700 272.700 879.300 257.300 875 253.300 870.700 238.300 870.700 232 866.700 223.300 867 208.300 870 196.700 875 190 880 183.300 886.700 176.700 898.300 171.700 904.300 166.700 898.300 164 891.700 164 888.700 160 888.700 153.300 885.700 150.700 887.700 141 876.700 142 865 140.700 863 137 856.700 133.300 844 132.300 839.300 129.300 839.300 120"/>
<path d="M890 202l4 1 2 1-2 2-3-1z"/>
</g>
<g fill="none" stroke="#111" stroke-width="3.200" transform="translate(620 120) scale(.33333)">
<path class="rough" d="M415 72 430 82 455 95 478 108 488 130 487 150 470 162 442 163 440 180 445 200 442 215 453 235 455 252 475 260 492 255 508 272 515 290 502 305 505 330 525 350 532 362"/>
<path class="rough" d="M532 362 560 355 590 335 603 330 603 290 625 278 660 268 690 248 715 238 722 220 745 210 757 195 753 175 780 170 835 155"/>
<path class="rough" d="M532 365 520 370 510 395 492 418 480 424 466 412 460 380 440 350 426 345 428 310 395 285 340 258 338 230 310 225 280 210 275 188 232 188"/>
<path class="rough" d="M492 420 487 460 460 485 438 520 402 528 402 515 376 475 340 475 290 482 284 440 293 405 255 380 228 355 222 345 206 340 190 325 165 325"/>
<path class="rough" d="M197 245 240 263 257 275 262 308 245 298 215 315 206 340"/>
<path class="rough" d="M578 18 545 40 522 75 545 90 550 115 538 125 545 140 565 150 580 168 612 172 606 140 645 130 622 120 620 90 605 75 605 50 594 35 592 18"/>
<path class="rough" d="M672 37 640 48 623 55 640 88 690 112 712 105 700 75 730 65 735 62"/>
<path class="rough" d="M438 520 442 548 475 568 515 562 545 585 580 588 610 605 625 570 665 590 714 605"/>
<path class="rough" d="M402 528 390 558 370 552 340 580 300 602 270 615 245 592 200 588 193 618 145 622 110 603 60 575 14 520"/>
<path class="rough" d="M515 565 505 605 475 640 455 660 402 652 345 668 300 690 255 712 235 732 170 745 150 732 138 760 120 780 95 808"/>
<path class="rough" d="M455 660 456 678 418 698 417 720 442 742 435 770 418 785 407 810"/>
<path class="rough" d="M-30 730 0 742 12 765 18 790 45 805 70 808 95 808"/>
</g>
<g fill="none" stroke="#111" stroke-width="3.200" transform="translate(480 380) scale(.33333)">
<path class="rough" d="M435 0 437 12 465 25 515 32 530 22 543 0"/>
<path class="rough" d="M465 25 445 32 440 62 440 100 433 140 450 158 466 155 466 167 447 175"/>
<path class="rough" d="M188 122 210 140 240 152 318 146 350 160 447 175 453 200 446 250 438 280 455 292 490 282 500 292 500 318 450 315 440 305 400 308 378 300 360 278 300 282 270 300 235 325 203 340 200 358 150 355 125 352"/>
<path class="rough" d="M500 290 530 298 555 300 548 340 560 382 620 382 665 390 680 405"/>
<path class="rough" d="M835 0 825 40 832 90 808 155 790 185 810 220 808 260 795 298 757 310 753 350 708 353 690 385 695 395 680 405 678 430 657 455 692 485 690 497"/>
<path class="rough" d="M690 497 650 510 612 540 605 570 592 598 592 640 587 680 557 720 560 760 580 790 580 803"/>
<path class="rough" d="M690 497 710 540 750 565 780 562 795 600 830 630 860 622 862 590 885 545 900 490 920 460 912 440 925 410 940 403 967 410"/>
<path class="rough" d="M638 385 600 402 575 420 560 450 520 470 480 505 445 502 447 548 440 580 410 620 400 645 330 700 303 752 262 768 158 750"/>
<path class="rough" d="M447 548 415 542 390 552 370 540 375 478 350 440 318 425 270 430 235 450 205 480 180 500 160 500 123 470"/>
<path class="rough" d="M290 365 322 352 345 365 363 380 355 395 322 402 295 388 290 365"/>
<path class="rough" d="M397 803 420 782 445 775 460 792 490 775 515 790 525 803"/>
<path class="rough" d="M533 800 555 787 580 795"/>
<path d="M50 383 80 370 130 322 132 335 112 348 90 372 60 385 64 403z" fill="#8d966b"/>
<path d="M136 365v10m-2 10v12m6 2v12m-4 8l6 12" stroke-dasharray="5 3" stroke-width="6"/>
</g>
<g fill="#8d966b" stroke="#111" stroke-width="3" transform="translate(350 420) scale(.33333)">
<path d="M197 75l10-6 8 8-10 12-8-4zM135 150l10-14 10 12-8 15v32l-30 5 2-8 16-4zM160 145l20-20 20 5 3 18-18-10-15 10zM195 145l10 20 12 14 20-4 8 5 10 25-22-4-24 16-5 16h-25l-4-10-14-6-4-10 18 12 16-6-16-6-3-16 12-2 10 10 6-12-6-16zM128 312l10-2 5 20-14 6zM78 430l22-6-1 14-10 8zM138 248l20-6-12 8zM20 300h8l-3 6zM200 406h8l-4 4zM232 400h12l-6 8z"/>
<path fill="none" stroke-width="5" stroke-dasharray="5 4 2 5" d="M195 33l8 40M183 55l25 10M165 95h12m15 5h16M170 105l-6 8M205 112l4 20M228 112l15 8-5 12M215 125l16-6M218 140l-8 12M250 148l10 12-25-4M165 150l10 12-6 10 20 15M180 170l12 14M255 200l18 2M256 215l20 2M108 338h10M145 320l8 18M150 325l20 15M145 232l4 4M22 355l8 2m4 5l3 6M134 378l6 20M140 395l8 12M130 418h5M162 410l3 6M123 180l14-6M262 158h3"/>
</g>
</svg>
</main>
<footer class="status"><span class="k1">Coordinate</span><div class="inp w1">92305,2786184</div><svg class="mouse" viewBox="0 0 16 16"><g stroke="#333" fill="#eee"><ellipse cx="5" cy="6" rx="3" ry="5" transform="rotate(-35 5 6)"/><circle cx="10" cy="12" r="3.500"/><path d="M2 3l7 7M8 5l6-4M9 7l5-3M3 10l4 5M12 10l-4 4" fill="none"/></g></svg><span class="k2">Scale</span><div class="inp w2">1:1,891,298<em></em></div><svg class="lock" viewBox="0 0 12 16"><path d="M3 8V4q3-6 6 0v4" fill="none" stroke="#aaa" stroke-width="2"/><rect y="7" width="12" height="9" rx="1.500" fill="#626262"/></svg><span class="k3">Magnifier</span><div class="inp spin w3">100%<i></i></div><span class="k4">Rotation</span><div class="inp spin w4">0.0<i></i></div><q class="on"></q><span class="k5">Render</span><svg class="crs" viewBox="0 0 16 16"><circle cx="8" cy="8" r="6.500" fill="#aaa" stroke="#333" stroke-width="2.500"/><path d="M8 3.500L12.500 8 8 12.500 3.500 8z" fill="#fff" stroke="#333" stroke-width="1.200"/><circle cx="8" cy="8" r="2.500" fill="#ddd" stroke="#666"/></svg><span class="k6">EPSG:3826 (OTF)</span><svg class="bub" viewBox="0 0 16 16"><ellipse cx="8" cy="7" rx="8" ry="6" fill="#666"/><path d="M9 11l5 4v-6z" fill="#666"/><path d="M4 7h2m1 0h2m1 0h2" stroke="#fff" stroke-width="1.600"/></svg></footer>
<div class="task">
<div class="tb"><svg viewBox="0 0 16 16"><path d="M0 2.500l7-1v6H0zm8-1.200L16 0v7.500H8zM0 8.500h7v6l-7-1zm8 0h8V16l-8-1.200z" fill="#fff"/></svg></div>
<div class="tb"><svg viewBox="0 0 16 16"><circle cx="10.500" cy="5.500" r="5" fill="none" stroke="#fff" stroke-width="1.300"/><path d="M7 9.500L0 16" stroke="#fff" stroke-width="1.400"/></svg></div>
<div class="tb"><svg class="tv" viewBox="0 0 20 16"><path d="M4.500 1.500h11v13h-11zM3 3.500H.5v9H3M17 3.500h2.500v9H17" fill="none" stroke="#fff" stroke-width="1.200"/></svg></div>
<div class="tb run"><svg class="fx" viewBox="0 0 22 20"><path d="M0 1h9l1 2h11v16H0z" fill="#f3c860"/><path d="M0 5h22v14H0z" fill="#ffe596"/><path d="M4 11h14v8h-4v-4H8v4H4z" fill="#2eaee8"/></svg></div>
<div class="tb run act"><svg class="fx" viewBox="0 0 24 24"><use href="#qgis"/></svg></div>
<div class="tray"><svg viewBox="2 0 180 20"><g fill="none" stroke="#fff" stroke-width="1.200"><path d="M3 13l5.500-5.500 5.500 5.500M30.500 6.500h10v8h-10zM41.500 9v3M26 5v4h4V5m-2 4v4h2M53.500 5.500h10v8h-10zM49.500 5v4h4M56 16.500h6M59 14v3M73 8h3l4-3v10l-4-3h-3zM82 8q2 2 0 4M84 6q3 4 0 8M86.500 4q5 6 0 12"/></g><path d="M32 8h7v5h-7zM97 4h15v11h-4l-3 3-3-3h-5z" fill="#fff"/><path d="M100 8h10M100 11h7" stroke="#000" stroke-width="1.300"/></svg><span class="eng">ENG</span><div class="clock">17:55<br>10/01/2018</div></div>
</div>
</div>

<div class="menu one"><div>Cartogram</div><div>Dissolve with stats</div><div>OpenStreetMap</div><div>Research Tools</div><div>Geoprocessing Tools</div><div class="hi">Geometry Tools</div><div>Analysis Tools</div><div>Data Management Tools</div></div>
<div class="menu sub"><div><svg><use href="#mcheck"/></svg>Check validity</div><div><svg><use href="#qgis"/></svg>Densify geometries</div><div class="hi"><svg><use href="#mcent"/></svg>Polygon centroids</div><div><svg><use href="#mpoly"/></svg>Lines to polygons</div><div><svg><use href="#mpoly"/></svg>Polygons to lines</div><div><svg><use href="#mmulti"/></svg>Multipart to singleparts</div><div><svg><use href="#msimp"/></svg>Simplify geometries</div><div><svg><use href="#mext"/></svg>Extract nodes</div><div><svg><use href="#mdel"/></svg>Delaunay triangulation</div><div><svg><use href="#msing"/></svg>Singleparts to multipart</div><div><svg><use href="#mexp"/></svg>Export/Add geometry columns</div><div><svg><use href="#mvor"/></svg>Voronoi polygons</div></div>
<script src="map.js"></script>
</body>
</html>
```
FILE: styles.css
```css
*{box-sizing:border-box}
body{margin:0;width:1280px;height:720px;overflow:hidden;position:relative;background:#efefef;color:#000;font:11px/16px "DejaVu Sans Condensed","DejaVu Sans",sans-serif;letter-spacing:-.2px}
i,em{font-style:normal}
q::before,q::after{content:none}
s,u{text-decoration:none}
svg{display:block;flex:none}
.defs{position:absolute}
.app{display:flex;flex-direction:column;height:720px}
.app>*{flex:none}
.title{height:24px;background:#fff;display:flex;align-items:center;font:12px "Open Sans","Noto Sans",sans-serif;padding-left:3px;letter-spacing:-.15px}
.title span{margin-left:4px}
.s16{width:16px;height:16px}
.winbtns{width:110px;height:24px;margin-left:auto;margin-right:14px}
.menubar{height:22px;border-bottom:1px solid #b9b9b9;display:flex;align-items:center;padding-left:9px;white-space:nowrap}
.menubar span{height:18px;line-height:20px;flex:none;letter-spacing:-.25px}
.m1{width:49px}.m2{width:33px}.m3{width:37px}.m4{width:42px}.m5{width:54px}.m6{width:43px}
.m7{width:42px;background:#dcdcdc;border:1px solid #888;padding-left:4px;line-height:18px!important}
.m8{width:55px;padding-left:8px}.m9{width:61px}.m10{width:37px}.m11{width:66px}
.bar{height:39px;border-bottom:1px solid #b9b9b9;border-top:1px solid #fafafa;display:flex;align-items:center;padding-left:4px}
.bar.two{height:41px;border-bottom:2px solid #b7b7b7;padding-bottom:1px}
.bar b{width:35px;flex:none;display:flex;justify-content:center}
.bar svg{width:24px;height:24px;overflow:visible}
.bar em,.side em,.dtools em{flex:none;border:5px solid transparent;border-top-color:#000;border-bottom:0;width:10px;margin:0 1px}
.bar em.off{border-top-color:#8e8e8e}
.grip{width:14px;height:30px;flex:none;background:radial-gradient(circle at 1.500px 1.500px,#bcbcbc 1px,transparent 1.400px) 8px 0/6px 6px repeat-y,radial-gradient(circle at 1.500px 1.500px,#bcbcbc 1px,transparent 1.400px) 11px 3px/6px 6px repeat-y}
.grip.first{width:7px;background-position:1px 0,4px 3px}
.grip.wide{width:15px}
.gap{width:152px;flex:none}
.bar .gap~b{width:35.300px}
.hgrip{height:6px;background:radial-gradient(circle at 1.500px 1.500px,#c0c0c0 1px,transparent 1.400px) 0 0/6px 6px repeat-x,radial-gradient(circle at 1.500px 1.500px,#c0c0c0 1px,transparent 1.400px) 3px 3px/6px 6px repeat-x}
.main{display:flex;height:523px}
.side{width:51px;border-right:1px solid #c4c4c4;padding-top:3px;height:523px}
.side .hgrip{display:block;margin:0 4px}
.side .hgrip.end{margin-top:9px}
.side p{margin:0;height:34px;display:flex;align-items:center;padding-left:8px}
.side svg{width:24px;height:24px}
.side em{margin-left:5px}
.dock{width:296px;padding-left:2px;display:flex;flex-direction:column;overflow:hidden}
.dtitle{height:16px;display:flex;align-items:center;gap:10px;padding-right:1px;font-size:10.500px;flex:none}
.dtitle .hgrip{flex:1}
.dtitle u{width:18px}
.dtitle.lay{gap:7px;height:15px;margin-top:-1px}
.dbtn{width:14px;height:14px}
.lay .dbtn+.dbtn{margin-left:-6px}
.dtools{height:34px;display:flex;align-items:center;gap:11px;padding-left:7px;flex:none}
.dtools svg{width:16px;height:16px;overflow:visible}
.dtools em{margin:0 1px 0 -7px}
.browser{height:312px;border:1px solid #b5b5b5;border-radius:2px;background:#fff;display:grid;grid-template:292px 17px/274px 17px;padding-top:1px;width:293px;flex:none}
.tree{overflow:hidden;white-space:nowrap}
.row{letter-spacing:-.12px}
.row,.lrow{display:flex;height:16px;align-items:center}
.row>i,.lrow>i{width:20px;height:16px;flex:none;position:relative}
.row svg{width:16px;height:16px;margin:0 4px}
.row.f svg{height:12px;width:17px;margin:0 5px 2px 3px}
.hov{background:#efefef}
.v{background:repeating-linear-gradient(#999 0 1px,transparent 1px 2px) 10px 0/1px 16px no-repeat}
.t,.e{background:repeating-linear-gradient(#999 0 1px,transparent 1px 2px) 10px 0/1px 16px no-repeat,repeating-linear-gradient(90deg,#999 0 1px,transparent 1px 2px) 10px 7px/10px 1px no-repeat}
.l{background-size:1px 8px,10px 1px}
.e::before{content:"";position:absolute;left:5px;top:2px;width:9px;height:9px;border:1px solid #888;background:linear-gradient(#555,#555) 1px 3px/5px 1px no-repeat,linear-gradient(#555,#555) 3px 1px/1px 5px no-repeat,#fafafa}
.e.o::before{background:linear-gradient(#555,#555) 1px 3px/5px 1px no-repeat,#fafafa}
.vs{display:flex;flex-direction:column;background:#f0f0f0}
.vs .thumb{height:125px;width:16px;margin-bottom:auto}
.thumb{border:1px solid #8f8f8f;border-radius:2px;background:linear-gradient(90deg,#fff,#e6e6e6);display:flex;align-items:center;justify-content:center}
.hs .thumb{background:linear-gradient(#fff,#e6e6e6);width:215px;height:16px}
.thumb i{width:12px;height:18px;background:radial-gradient(circle,#aaa .8px,transparent 1px) 0 0/3px 3px}
.hs .thumb i{width:18px;height:12px}
.hs{display:flex;grid-column:1/3;background:#f0f0f0}
.trk{width:12px}
.sb{width:16px;height:16px;border:1px solid #8f8f8f;border-radius:2px;background:linear-gradient(#fff,#eee);display:flex;align-items:center;justify-content:center;flex:none}
.hs .sb{width:15.500px}
.sb::before{content:"";border:4px solid transparent}
.up::before{border-bottom-color:#000;border-top:0}.dn::before{border-top-color:#000;border-bottom:0}
.lf::before{border-right-color:#000;border-left:0}.rt::before{border-left-color:#000;border-right:0}
.split{height:7px;background:radial-gradient(circle at 1.500px 1.500px,#c0c0c0 1px,transparent 1.400px) 0 0/6px 6px repeat-x;width:94px;margin:2px 0 0 95px;flex:none}
.dtools.lt{height:35px}
.layers{width:293px;height:103px;border:2px solid #3f96f5;border-radius:2px;background:#fff;font-weight:bold;flex:none}
.lrow{letter-spacing:.3px}
.layers .lrow{margin-left:-1px}
.lrow q,.status q{width:12px;height:12px;border:1px solid #bbb;background:#fff;flex:none;margin:0 6px 0 4px;display:block;border-radius:1px}
.lrow q.on,.status q.on{background:linear-gradient(45deg,transparent 36%,#000 36% 64%,transparent 64%) 1px 1px/8px 8px no-repeat,linear-gradient(-45deg,transparent 36%,#000 36% 64%,transparent 64%) 1px 1px/8px 8px no-repeat,#fff}
.lrow s{width:16px;height:16px;border:1px solid #555;margin-right:6px;flex:none}
.lrow svg{width:16px;height:12px;margin-right:6px}
.c1{background:#4a9180}.c2{background:#8d966b}.c3{background:#59e01b}
.cur{background:#3697fb;color:#fff;outline:1px dotted #c47b35;outline-offset:-1px}
.cur span{text-decoration:underline}
.vsplit{width:7px;flex:none;border-right:2px solid #b8b8b8;background:radial-gradient(circle at 1.500px 1.500px,#c4c4c4 1px,transparent 1.400px) 1px 0/4px 6px repeat-y}
.map{width:926px;height:523px;background:#fff;border-bottom:1px solid #b5b5b5}
.status{height:31px;display:flex;align-items:center;padding:2px 0 0 421px;white-space:nowrap}
.status>*{flex:none}
.k1{width:57px}.k2{width:29px;margin-left:14px}.k3{width:49px;margin-left:15px}.k4{width:51px;margin-left:8px}.k5{width:55px}.k6{width:106px}
.inp{height:20px;border:1px solid #aaa;border-radius:2px;background:#fff;line-height:18px;padding-left:4px;display:flex}
.w1{width:121px;justify-content:center;padding:0}.w2{width:89px}.w3{width:76px}.w4{width:77px}
.mouse{width:16px;height:16px;margin-left:4px}
.lock{width:12px;height:16px;margin-left:7px}
.w2 em{margin-left:auto;width:16px;border-left:1px solid #bbb;background:#efefef;display:flex;align-items:center;justify-content:center}
.w2 em::before{content:"";border:5px solid transparent;border-top-color:#000;border-bottom:0}
.spin i{margin-left:auto;width:15px;border-left:1px solid #bbb;background:linear-gradient(#bbb,#bbb) 0 9px/100% 1px no-repeat,#f2f2f2;display:flex;flex-direction:column;align-items:center;justify-content:space-around}
.spin i::before,.spin i::after{content:"";border:4px solid transparent}
.spin i::before{border-bottom-color:#000;border-top:0}.spin i::after{border-top-color:#000;border-bottom:0}
.status q.on{margin:0 4px 0 7px}
.crs{width:15px;height:15px;margin-right:3px}
.bub{width:16px;height:16px}
.task{height:40px;background:#000;display:flex;color:#fff}
.tb{width:48px;height:40px;display:flex;align-items:center;justify-content:center}
.tb svg{width:16px;height:16px}
.tb .tv{width:20px}
.tb .fx{width:21px;height:20px}
.tb.run{border-bottom:2px solid #9bcc52;width:40px;margin-left:6px}
.tb.act{width:48px;background:#333;margin-left:5px}
.tray{margin-left:auto;display:flex;align-items:center;font:12px/17px "Open Sans","Noto Sans",sans-serif;letter-spacing:-.35px;width:235px}
.tray svg{width:180px;height:20px;overflow:hidden;margin-right:-59px}
.eng{width:26px}
.clock{width:84px;text-align:center;border-right:1px solid #555;height:40px;padding:2px 12px 0 11px;flex:none}
.menu{position:absolute;background:#f7f7f7;border:1px solid #8a8a8a;box-shadow:2px 2px 3px #777;padding:1px 0;white-space:nowrap}
.one{left:267px;top:43px;width:160px;height:154px}
.one div{height:19px;line-height:19px;padding-left:24px;position:relative}
.one div::after{content:"";position:absolute;right:11px;top:5px;border:3px solid transparent;border-left-color:#000;border-right:0}
.menu .hi{background:linear-gradient(#409ffe,#2c87e4);color:#fff}
.sub{left:425px;top:139px;width:192px;height:254px;padding:0}
.sub div{height:21px;display:flex;align-items:center;padding:2px 0 0 2px}
.sub svg{width:16px;height:16px;margin-right:6px}
```
FILE: map.js
```js
// Adds fine deterministic irregularity to boundary polylines.
let seed = 7;
function rnd() {
  seed = (seed * 16807) % 2147483647;
  return seed / 2147483647 - 0.5;
}
document.querySelectorAll('.rough').forEach(function (path) {
  const step = parseFloat(path.dataset.step || 8);
  const amp = parseFloat(path.dataset.amp || 4) * 2;
  const n = path.getAttribute('d').slice(1).trim().split(/\s+/).map(Number);
  let d = 'M' + n[0] + ' ' + n[1];
  for (let i = 2; i < n.length; i += 2) {
    const x0 = n[i - 2], y0 = n[i - 1], x1 = n[i], y1 = n[i + 1];
    const k = Math.max(1, Math.round(Math.hypot(x1 - x0, y1 - y0) / step));
    for (let j = 1; j < k; j++) {
      const t = j / k;
      d += 'L' + (x0 + (x1 - x0) * t + rnd() * amp).toFixed(1) + ' ' + (y0 + (y1 - y0) * t + rnd() * amp).toFixed(1);
    }
    d += 'L' + x1 + ' ' + y1;
  }
  path.setAttribute('d', d);
});
```
